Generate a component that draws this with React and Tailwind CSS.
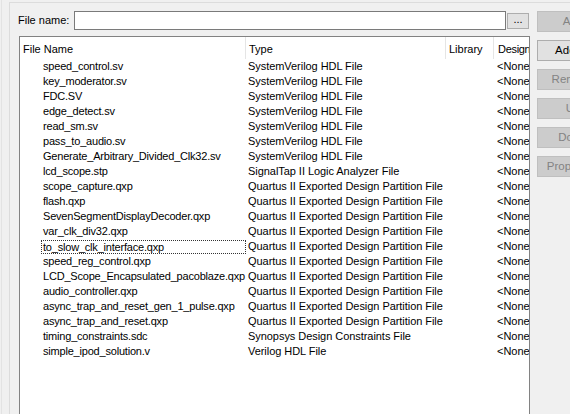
import React from "react";

const rows = [
  ["speed_control.sv", "SystemVerilog HDL File"],
  ["key_moderator.sv", "SystemVerilog HDL File"],
  ["FDC.SV", "SystemVerilog HDL File"],
  ["edge_detect.sv", "SystemVerilog HDL File"],
  ["read_sm.sv", "SystemVerilog HDL File"],
  ["pass_to_audio.sv", "SystemVerilog HDL File"],
  ["Generate_Arbitrary_Divided_Clk32.sv", "SystemVerilog HDL File"],
  ["lcd_scope.stp", "SignalTap II Logic Analyzer File"],
  ["scope_capture.qxp", "Quartus II Exported Design Partition File"],
  ["flash.qxp", "Quartus II Exported Design Partition File"],
  ["SevenSegmentDisplayDecoder.qxp", "Quartus II Exported Design Partition File"],
  ["var_clk_div32.qxp", "Quartus II Exported Design Partition File"],
  ["to_slow_clk_interface.qxp", "Quartus II Exported Design Partition File"],
  ["speed_reg_control.qxp", "Quartus II Exported Design Partition File"],
  ["LCD_Scope_Encapsulated_pacoblaze.qxp", "Quartus II Exported Design Partition File"],
  ["audio_controller.qxp", "Quartus II Exported Design Partition File"],
  ["async_trap_and_reset_gen_1_pulse.qxp", "Quartus II Exported Design Partition File"],
  ["async_trap_and_reset.qxp", "Quartus II Exported Design Partition File"],
  ["timing_constraints.sdc", "Synopsys Design Constraints File"],
  ["simple_ipod_solution.v", "Verilog HDL File"],
];

const buttons = [
  { label: "Add", enabled: false },
  { label: "Add All", enabled: true },
  { label: "Remove", enabled: false },
  { label: "Up", enabled: false },
  { label: "Down", enabled: false },
  { label: "Properties", enabled: false },
];

export default function App() {
  return (
    <div
      className="w-[570px] h-[414px] bg-[#f0f0f0] overflow-hidden flex text-[11px] leading-[15px] text-black"
      style={{ fontFamily: '"Liberation Sans", Arial, sans-serif' }}
    >
      <div className="ml-[1px] w-px h-full bg-[#e3e3e3] shrink-0" />
      <div className="ml-[7px] mt-[2px] flex-1 flex border-l border-t border-[#dcdcdc] min-w-0">
        {/* left column */}
        <div className="w-[520px] shrink-0 flex flex-col">
          <div className="flex items-center mt-[8px] h-[19px] pl-[8px]">
            <span className="w-[56px] shrink-0">File name:</span>
            <div className="w-[432px] h-[19px] bg-white border border-[#7a7a7a] shrink-0" />
            <div className="ml-[1px] w-[22px] h-[16px] bg-[#e1e1e1] border border-[#adadad] shrink-0 flex items-center justify-center leading-none pb-[3px]">
              ...
            </div>
          </div>
          <div className="mt-[6px] ml-[9px] w-[511px] flex-1 bg-white border-l border-t border-r border-[#828282] overflow-hidden">
            <div className="flex h-[22px] whitespace-nowrap">
              <div className="w-[226px] h-full flex items-center pt-[2px] pl-[3px] border-r border-[#e5e5e5] shrink-0">File Name</div>
              <div className="w-[200px] h-full flex items-center pt-[2px] pl-[3px] border-r border-[#e5e5e5] shrink-0">Type</div>
              <div className="w-[48px] h-full flex items-center pt-[2px] pl-[3px] border-r border-[#e5e5e5] shrink-0">Library</div>
              <div className="flex-1 h-full flex items-center pt-[2px] pl-[4px] overflow-hidden tracking-[-0.3px]">Design</div>
            </div>
            {rows.map(([name, type], i) => (
              <div key={i} className="flex h-[15px] items-center whitespace-nowrap">
                <div className="w-[226px] shrink-0 pl-[21px] flex tracking-[-0.2px]">
                  {i === 12 ? (
                    <span className="flex-1 h-[14px] flex items-center pl-px border border-dotted border-[#333] leading-[12px]">{name}</span>
                  ) : (
                    <span className="pl-[1px] border border-transparent">{name}</span>
                  )}
                </div>
                <div className="w-[200px] shrink-0 pl-[2px] tracking-[-0.05px]">{type}</div>
                <div className="w-[48px] shrink-0" />
                <div className="flex-1 pl-[3px] overflow-hidden">&lt;None&gt;</div>
              </div>
            ))}
          </div>
        </div>
        {/* right column */}
        <div className="ml-[7px] mt-[8px] flex flex-col gap-[8px]">
          {buttons.map((b) => (
            <div
              key={b.label}
              className={
                b.enabled
                  ? "w-[72px] h-[21px] flex items-center justify-center bg-[#e1e1e1] border border-[#adadad] text-black text-[11.5px]"
                  : "w-[72px] h-[21px] flex items-center justify-center bg-[#cccccc] border border-[#bfbfbf] text-[#838383] text-[11.5px]"
              }
            >
              {b.label}
            </div>
          ))}
        </div>
      </div>
    </div>
  );
}
